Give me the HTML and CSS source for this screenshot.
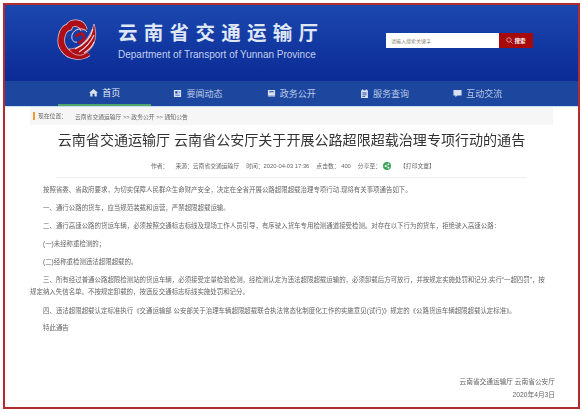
FILE: index.html
```html
<!DOCTYPE html>
<html lang="zh-CN">
<head>
    <meta charset="UTF-8">
    <title>云南省交通运输厅</title>
    <link rel="stylesheet" href="styles.css">
</head>
<body>

<div class="frame">
    <header class="site-head">
        <svg class="logo" viewBox="0 0 40 42">
            <path class="logo-edge" d="M27 12C25 4 14 3 12 9C4 11 2 25 7 31C12 39 24 40 31 35"/>
            <path class="logo-ring" d="M27 12C25 4 14 3 12 9C4 11 2 25 7 31C12 39 24 40 31 35"/>
            <path class="logo-swirl" d="M30 14C27 9 17 10 15 17C14 22 17 25 20 24"/>
            <path class="logo-neck" d="M19 19C21 15 26 15 27 18C28 22 24 24 21 25"/>
            <path class="logo-wing" d="M37 6C41 18 38 32 25 37C19 38 14 35 12 31C24 31 33 20 37 6Z"/>
            <path class="logo-stripe" d="M36 11C34 19 29 26 18 31M37 17C34 24 30 29 22 34M37 24C35 29 32 32 27 35"/>
        </svg>
        <div class="site-name">
            <h1>云南省交通运输厅</h1>
            <p>Department of Transport of Yunnan Province</p>
        </div>
        <form class="search">
            <input type="text" placeholder="请输入搜索关键字">
            <button type="button">
                <svg viewBox="0 0 10 10"><circle cx="4.2" cy="4.2" r="3.2"/><path d="M6.6 6.6L9.4 9.4"/></svg>
                搜索
            </button>
        </form>
    </header>

    <nav class="main-nav">
        <a class="active" href="#">
            <svg viewBox="0 0 10 10"><path d="M5 1L0 5.4h1.4V9.4h2.5V6.4h2.2v3h2.5V5.4H10z"/></svg>
            首页
        </a>
        <a href="#">
            <svg viewBox="0 0 10 10"><path fill-rule="evenodd" d="M1 1h8v8H1zM2.5 2.5v2.5h2.5V2.5zM6 3v1h2V3zM2.5 6.3v.9h5v-.9z"/></svg>
            要闻动态
        </a>
        <a href="#">
            <svg viewBox="0 0 10 10"><path fill-rule="evenodd" d="M1 1h8v8H1zM2.5 2.5v1h5v-1zM1 7.4v.8h8v-.8z"/></svg>
            政务公开
        </a>
        <a href="#">
            <svg viewBox="0 0 10 10"><path fill-rule="evenodd" d="M1.2 1.5h1.3V.4h1v1.1h3V.4h1v1.1h1.3V10H1.200zM2.700 4v.9h4.600V4zM2.700 6v.9h4.600V6zM2.700 8v.8h3V8z"/></svg>
            服务查询
        </a>
        <a href="#">
            <svg viewBox="0 0 10 10"><path d="M.5 1h9v6.300H4.600L2.700 9.300V7.300H.5z"/></svg>
            互动交流
        </a>
    </nav>

    <main class="page">
        <div class="crumbs">
            <span class="here">现在位置：</span>
            <span>云南省交通运输厅 &gt;&gt; 政务公开 &gt;&gt; 通知公告</span>
        </div>

        <h2 class="title">云南省交通运输厅 云南省公安厅关于开展公路超限超载治理专项行动的通告</h2>

        <div class="meta">
            <span>作者：</span>
            <span>来源：云南省交通运输厅</span>
            <span>时间：2020-04-03 17:36</span>
            <span>点击数： 400</span>
            <span class="share">分享至：
                <svg viewBox="0 0 10 10">
                    <circle class="share-bg" cx="5" cy="5" r="5"/>
                    <path class="share-lines" d="M6.800 2.900L3.200 5L6.800 7.100"/>
                    <circle class="share-dot" cx="6.800" cy="2.900" r="1.100"/>
                    <circle class="share-dot" cx="3.200" cy="5" r="1.100"/>
                    <circle class="share-dot" cx="6.800" cy="7.100" r="1.100"/>
                </svg>
            </span>
            <span class="print">【打印文章】</span>
        </div>

        <div class="content">
            <p>按照省委、省政府要求，为切实保障人民群众生命财产安全，决定在全省开展公路超限超载治理专项行动.现将有关事项通告如下。</p>
            <p>一、通行公路的货车，应当规范装载和运营，严禁超限超载运输。</p>
            <p>二、通行高速公路的货运车辆，必须按照交通标志标线及现场工作人员引导，有序驶入货车专用检测通道接受检测。对存在以下行为的货车，拒绝驶入高速公路：</p>
            <p>(一)未经称重检测的；</p>
            <p>(二)经称重检测违法超限超载的。</p>
            <p class="wrapped">三、所有经过普通公路超限检测站的货运车辆，必须接受定量检验检测，经检测认定为违法超限超载运输的，必须卸载后方可放行，并按规定实施处罚和记分,实行“一超四罚”，按规定纳入失信名单。不按规定卸载的，按违反交通标志标线实施处罚和记分。</p>
            <p class="tight">四、违法超限超载认定标准执行《交通运输部 公安部关于治理车辆超限超载联合执法常态化制度化工作的实施意见(试行)》规定的《公路货运车辆超限超载认定标准》。</p>
            <p>特此通告</p>
        </div>

        <div class="sign">
            <p>云南省交通运输厅 云南省公安厅</p>
            <p>2020年4月3日</p>
        </div>
    </main>
</div>

</body>
</html>
```

FILE: styles.css
```css
html, body {
    margin: 0;
    padding: 0;
    background: #ffffff;
}
body {
    font-family: "Liberation Sans", "Noto Sans CJK SC", sans-serif;
    color: #555;
    overflow: hidden;
}
.frame {
    width: 573px;
    height: 402px;
    margin: 3px 0 0 3px;
    border: 2px solid #b32b2e;
    overflow: hidden;
    filter: blur(0.4px);
}

/* header */
.site-head {
    height: 76px;
    padding-left: 52px;
    display: flex;
    background: linear-gradient(#1b48ae, #0b2a96);
    box-sizing: border-box;
}
.logo {
    width: 40px;
    height: 42px;
    margin-top: 13px;
}
.logo-edge {
    fill: none;
    stroke: #e6c9d2;
    stroke-width: 7.5;
}
.logo-ring {
    fill: none;
    stroke: #ae0e16;
    stroke-width: 6;
}
.logo-swirl {
    fill: none;
    stroke: #e8d8e2;
    stroke-width: 1;
}
.logo-neck {
    fill: none;
    stroke: #ae0e16;
    stroke-width: 3;
}
.logo-wing {
    fill: #ae0e16;
    stroke: #e6c9d2;
    stroke-width: 0.7;
}
.logo-stripe {
    fill: none;
    stroke: #f0dde2;
    stroke-width: 1.1;
}
.site-name {
    width: 200px;
    margin-left: 21px;
    padding-top: 16px;
}
.site-name h1 {
    margin: 0;
    font-size: 19.5px;
    line-height: 24px;
    letter-spacing: 6.300px;
    font-weight: bold;
    color: #dfe6f6;
    white-space: nowrap;
}
.site-name p {
    margin: 4px 0 0;
    font-size: 10px;
    line-height: 12px;
    color: #c3d0ee;
    white-space: nowrap;
}
.search {
    display: flex;
    height: 15px;
    margin: 28px 0 0 68px;
}
.search input {
    width: 113px;
    height: 15px;
    padding: 0 0 0 5px;
    border: 0;
    box-sizing: border-box;
    background: #fff;
    font-family: inherit;
    font-size: 5px;
}
.search input::placeholder {
    color: #8a7f78;
}
.search button {
    width: 34px;
    height: 15px;
    padding: 0;
    border: 0;
    background: #a70a0c;
    color: #fff;
    font-family: inherit;
    font-size: 5.5px;
    font-weight: bold;
    display: flex;
    align-items: center;
    justify-content: center;
    gap: 1px;
}
.search svg {
    width: 7px;
    height: 7px;
    fill: none;
    stroke: #f0c8c8;
    stroke-width: 1;
}

/* nav */
.main-nav {
    height: 25px;
    padding-left: 53px;
    display: flex;
    background: #1d479f;
    border-bottom: 1px solid #c5e0f5;
}
.main-nav a {
    width: 93.300px;
    height: 25px;
    box-sizing: border-box;
    display: flex;
    align-items: center;
    justify-content: center;
    gap: 4px;
    color: #b9c8e6;
    font-size: 9px;
    text-decoration: none;
}
.main-nav a svg {
    width: 9px;
    height: 9px;
    fill: #d8e0f2;
}
.main-nav a.active {
    color: #e8edf8;
    border-bottom: 2px solid #4fa56a;
}

/* article */
.crumbs {
    height: 18px;
    margin: 0 25px;
    padding-left: 3px;
    display: flex;
    align-items: center;
    gap: 8px;
    background: #f6f6f6;
    font-size: 5.800px;
    color: #666;
}
.here {
    padding-left: 3px;
    border-left: 2px solid #f39a2e;
    line-height: 8px;
}
.title {
    margin: 5px 0 0;
    text-align: center;
    font-size: 14.050px;
    line-height: 20px;
    font-weight: normal;
    color: #333;
}
.meta {
    margin: 8px 51px 0;
    height: 14px;
    padding: 0 0 5px 95px;
    display: flex;
    align-items: center;
    gap: 7px;
    border-bottom: 1px solid #eeeeee;
    font-size: 5.800px;
    white-space: nowrap;
    color: #666;
}
.share {
    display: flex;
    align-items: center;
    gap: 2px;
}
.share svg {
    width: 8px;
    height: 8px;
    margin-top: 1px;
}
.share-bg {
    fill: #3aa757;
}
.share-lines {
    fill: none;
    stroke: #fff;
    stroke-width: 0.600;
}
.share-dot {
    fill: #fff;
}
.print {
    margin-left: 2px;
}
.content {
    margin: 6px 25px 0;
    font-size: 6.440px;
    line-height: 12px;
    color: #666;
}
.content p {
    margin: 0 0 6px;
    text-indent: 13px;
}
.content p.wrapped {
    margin-bottom: 7px;
    padding-right: 7px;
}
.content p.tight {
    margin-bottom: 5px;
}
.sign {
    margin: 42px 23px 0 0;
    text-align: right;
    font-size: 6.700px;
    line-height: 12.500px;
    color: #666;
}
.sign p {
    margin: 0;
}
```
